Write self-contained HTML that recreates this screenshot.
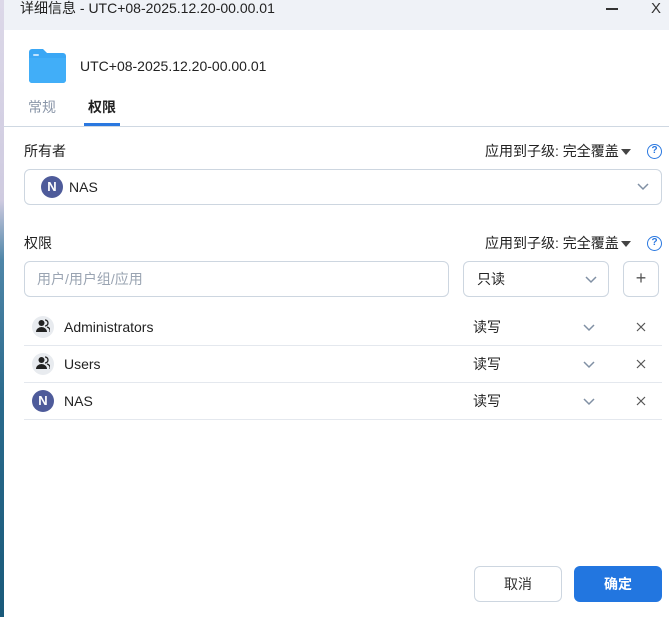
<!DOCTYPE html><html><head><meta charset="utf-8"><style>
*{margin:0;padding:0;box-sizing:border-box}
body{width:669px;height:617px;overflow:hidden;position:relative;background:#fff;font-family:"Liberation Sans","Noto Sans CJK SC",sans-serif;color:#222;font-size:14px;line-height:17px}
.a{position:absolute}
.strip{left:0;top:0;width:4px;height:617px;background:linear-gradient(#dcd8e8 0,#cfcbe0 200px,#4f86a8 260px,#2a6a8c 400px,#1a5a7a 617px)}
.title{left:4px;top:0;width:665px;height:30px;background:#eff2f7}
.box{border:1px solid #cdd6e0;border-radius:6px}
.av{width:22px;height:22px;border-radius:50%;background:#4e5b9a;color:#fff;font-weight:bold;font-size:13px;text-align:center;line-height:22px}
.gv{width:22px;height:22px;border-radius:50%;background:#e8ebef}
.row{left:24px;width:638px;height:37px;border-bottom:1px solid #e4e8ee}
.q{width:15px;height:15px;border:1.5px solid #2a78e0;border-radius:50%;color:#2a78e0;font-size:10px;font-weight:bold;text-align:center;line-height:12px}
.tri{display:inline-block;width:0;height:0;border-left:5px solid transparent;border-right:5px solid transparent;border-top:6px solid #444;vertical-align:middle;margin-left:2px}
</style></head><body>
<div class="a strip"></div>
<div class="a title"></div>
<div class="a" style="left:20px;top:0;font-size:14px">详细信息 - UTC+08-2025.12.20-00.00.01</div>
<div class="a" style="left:606px;top:8px;width:12px;height:1.5px;background:#333"></div>
<div class="a" style="left:651px;top:0px;font-size:15px;color:#333">X</div>
<svg class="a" style="left:29px;top:49px" width="38" height="34"><path d="M3 0h11l4 4h16a3 3 0 0 1 3 3v24a3 3 0 0 1-3 3H3a3 3 0 0 1-3-3V3a3 3 0 0 1 3-3z" fill="#3aa7f5"/><path d="M0 9h37v22a3 3 0 0 1-3 3H3a3 3 0 0 1-3-3z" fill="#41aef8"/><rect x="4" y="5" width="6" height="2" rx="1" fill="#bfe3ff"/></svg>
<div class="a" style="left:80px;top:58px;font-size:14px">UTC+08-2025.12.20-00.00.01</div>
<div class="a" style="left:28px;top:99px;color:#8a96a8">常规</div>
<div class="a" style="left:88px;top:99px;font-weight:bold">权限</div>
<div class="a" style="left:84px;top:123px;width:36px;height:3px;background:#2a78e0"></div>
<div class="a" style="left:4px;top:126px;width:665px;height:1px;background:#cfd8e2"></div>

<div class="a" style="left:24px;top:143px">所有者</div>
<div class="a" style="left:485px;top:143px">应用到子级: 完全覆盖<span class="tri"></span></div>
<div class="a q" style="left:647px;top:144px">?</div>
<div class="a box" style="left:24px;top:169px;width:638px;height:36px"></div>
<div class="a av" style="left:41px;top:176px">N</div>
<div class="a" style="left:69px;top:179px">NAS</div>
<svg class="a" style="left:637px;top:183px" width="12" height="8"><path d="M1 1l5 5 5-5" stroke="#8090a4" stroke-width="1.5" fill="none"/></svg>

<div class="a" style="left:24px;top:235px">权限</div>
<div class="a" style="left:485px;top:235px">应用到子级: 完全覆盖<span class="tri"></span></div>
<div class="a q" style="left:647px;top:236px">?</div>
<div class="a box" style="left:24px;top:261px;width:425px;height:36px"></div>
<div class="a" style="left:37px;top:271px;color:#9aa4b2">用户/用户组/应用</div>
<div class="a box" style="left:463px;top:261px;width:146px;height:36px"></div>
<div class="a" style="left:477px;top:271px">只读</div>
<svg class="a" style="left:585px;top:276px" width="12" height="8"><path d="M1 1l5 5 5-5" stroke="#8090a4" stroke-width="1.5" fill="none"/></svg>
<div class="a box" style="left:623px;top:261px;width:36px;height:36px;text-align:center;line-height:33px;font-size:18px;color:#555">+</div>

<div class="a row" style="top:309px"></div>
<div class="a row" style="top:346px"></div>
<div class="a row" style="top:383px"></div>
<div class="a gv" style="left:32px;top:316px"></div>
<div class="a gv" style="left:32px;top:353px"></div>
<svg class="a" style="left:36px;top:319px" width="14" height="14"><circle cx="5.5" cy="4" r="3" fill="#222"/><path d="M0 13a5.5 5 0 0 1 11 0z" fill="#222"/><path d="M9 1a3 3 0 0 1 0 6M11 8a4 4 0 0 1 3 5" stroke="#222" stroke-width="1.3" fill="none"/></svg>
<svg class="a" style="left:36px;top:356px" width="14" height="14"><circle cx="5.5" cy="4" r="3" fill="#222"/><path d="M0 13a5.5 5 0 0 1 11 0z" fill="#222"/><path d="M9 1a3 3 0 0 1 0 6M11 8a4 4 0 0 1 3 5" stroke="#222" stroke-width="1.3" fill="none"/></svg>
<div class="a av" style="left:32px;top:390px">N</div>
<div class="a" style="left:64px;top:319px">Administrators</div>
<div class="a" style="left:64px;top:356px">Users</div>
<div class="a" style="left:64px;top:393px">NAS</div>
<div class="a" style="left:473px;top:319px">读写</div>
<div class="a" style="left:473px;top:356px">读写</div>
<div class="a" style="left:473px;top:393px">读写</div>
<svg class="a" style="left:583px;top:324px" width="12" height="8"><path d="M1 1l5 5 5-5" stroke="#8090a4" stroke-width="1.5" fill="none"/></svg>
<svg class="a" style="left:583px;top:361px" width="12" height="8"><path d="M1 1l5 5 5-5" stroke="#8090a4" stroke-width="1.5" fill="none"/></svg>
<svg class="a" style="left:583px;top:398px" width="12" height="8"><path d="M1 1l5 5 5-5" stroke="#8090a4" stroke-width="1.5" fill="none"/></svg>
<svg class="a" style="left:636px;top:322px" width="10" height="10"><path d="M1 1l8 8M9 1l-8 8" stroke="#555" stroke-width="1.2"/></svg>
<svg class="a" style="left:636px;top:359px" width="10" height="10"><path d="M1 1l8 8M9 1l-8 8" stroke="#555" stroke-width="1.2"/></svg>
<svg class="a" style="left:636px;top:396px" width="10" height="10"><path d="M1 1l8 8M9 1l-8 8" stroke="#555" stroke-width="1.2"/></svg>

<div class="a box" style="left:474px;top:566px;width:88px;height:36px;text-align:center;line-height:34px;color:#333">取消</div>
<div class="a" style="left:574px;top:566px;width:88px;height:36px;border-radius:6px;background:#2276e0;color:#fff;text-align:center;line-height:36px;font-weight:bold">确定</div>
</body></html>
